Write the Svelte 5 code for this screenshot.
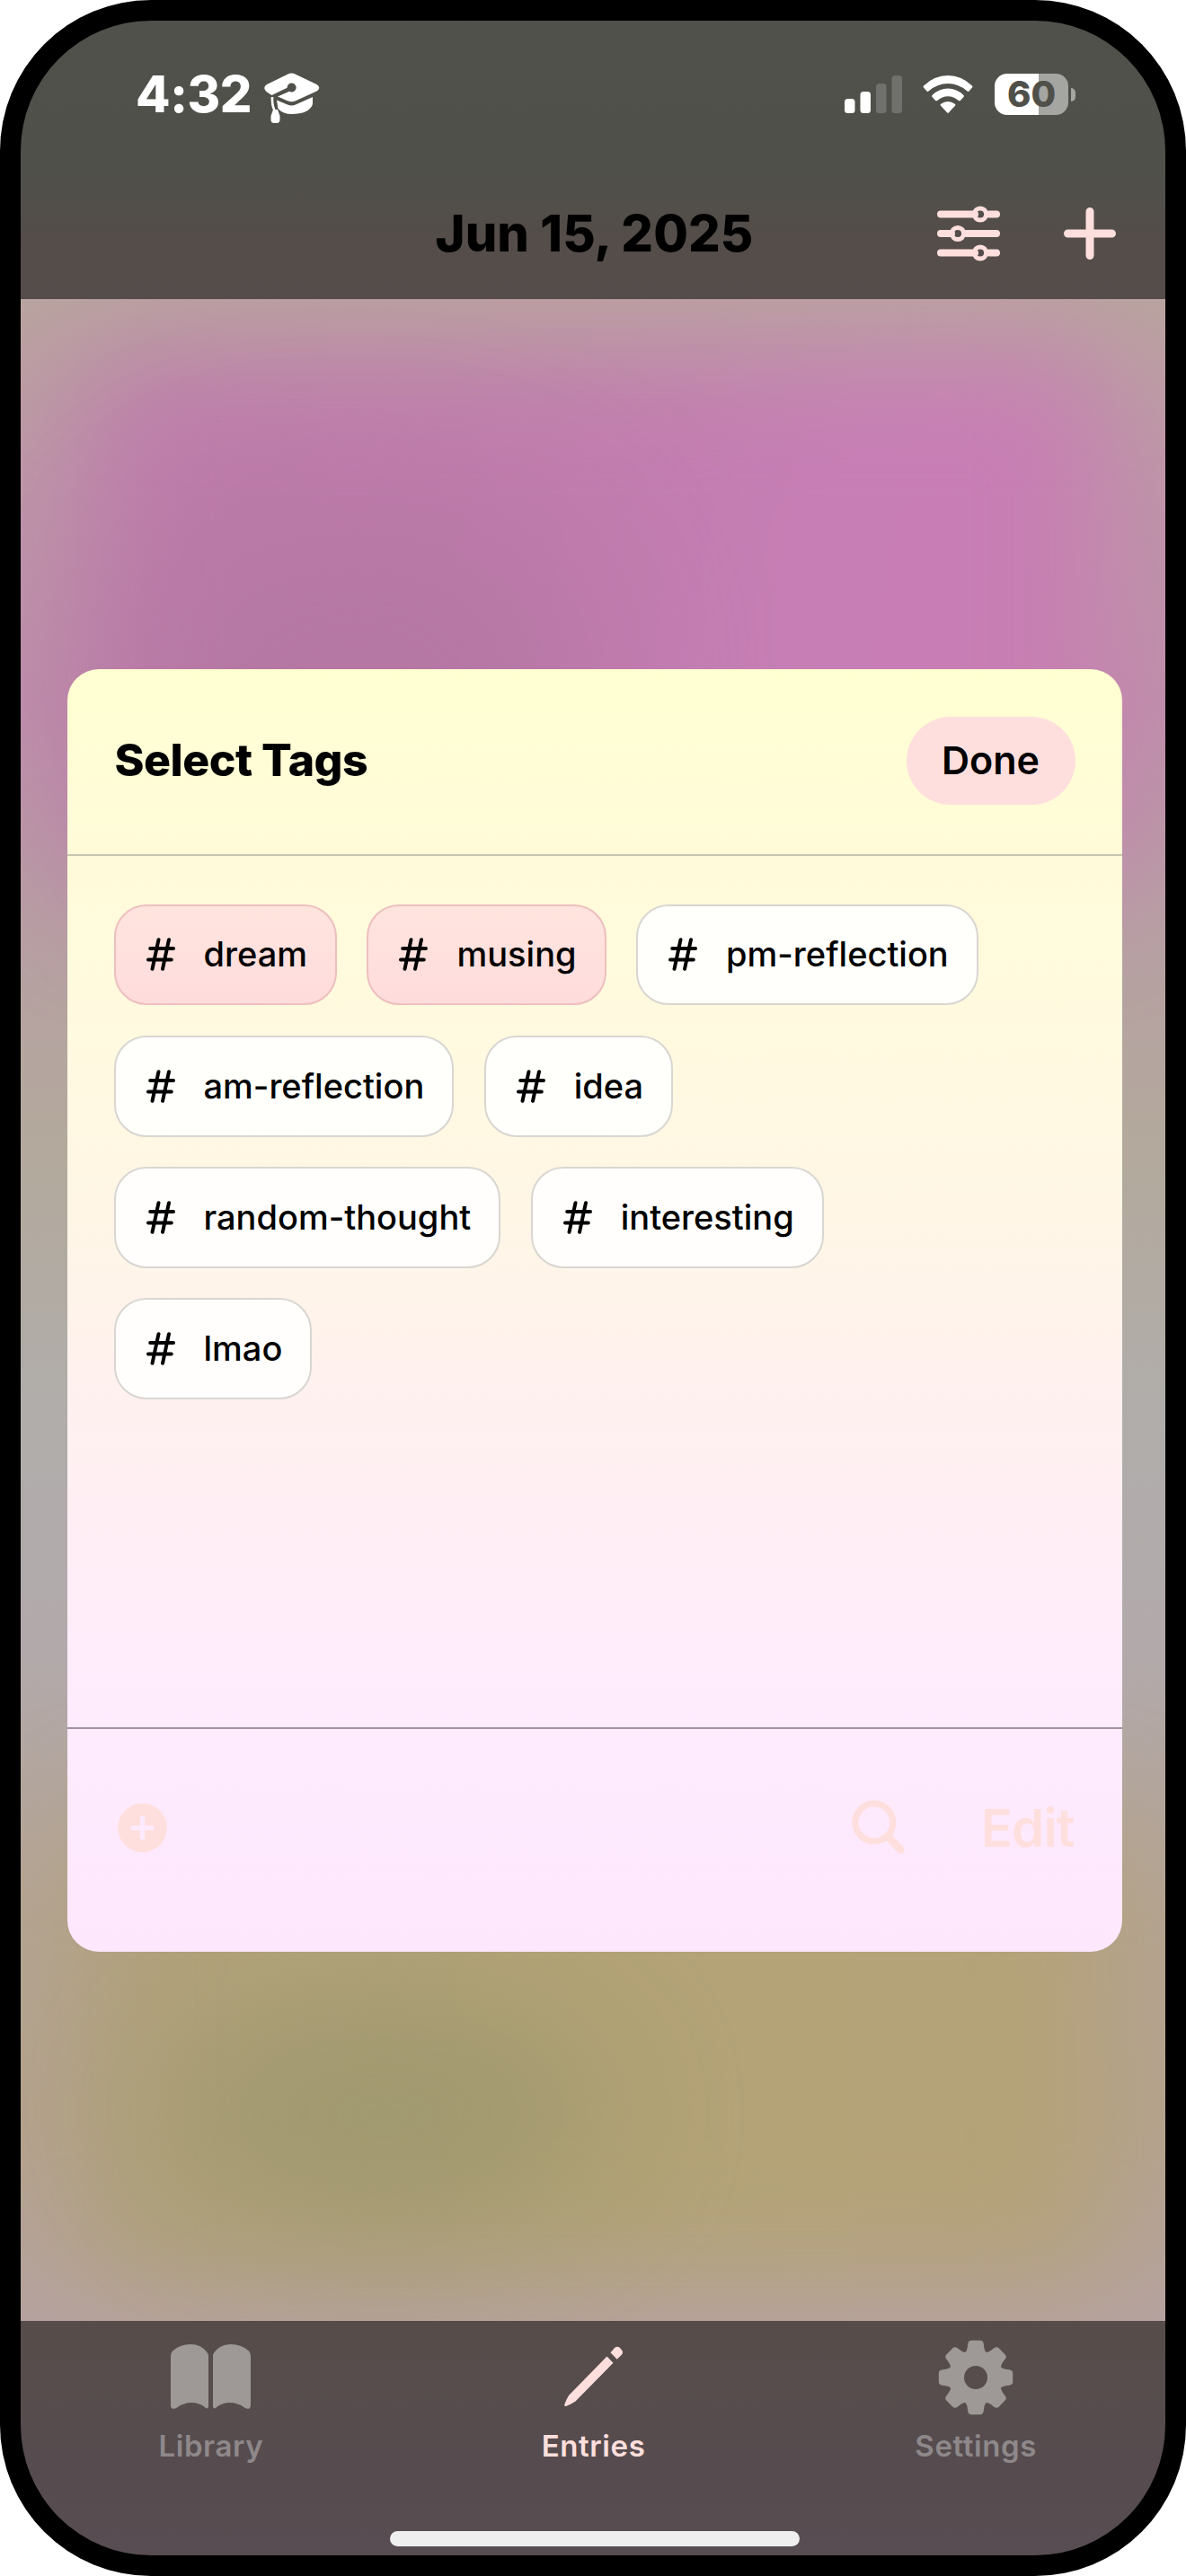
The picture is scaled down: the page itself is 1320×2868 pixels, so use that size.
<script>
  const tags = [
    { name: 'dream', selected: true },
    { name: 'musing', selected: true },
    { name: 'pm-reflection', selected: false },
    { name: 'am-reflection', selected: false },
    { name: 'idea', selected: false },
    { name: 'random-thought', selected: false },
    { name: 'interesting', selected: false },
    { name: 'lmao', selected: false }
  ];
</script>

<div class="phone">
  <div class="screen">
    <header>
      <div class="status">
        <div class="clock">
          <span class="time">4:32</span>
          <svg class="cap" width="62" height="57" viewBox="0 0 62 57">
            <path d="M26.500 1.500Q30.500 -0.500 34.500 1.500L58.500 13Q64 16.500 58.500 20.500L35 31.300Q30.500 33 26 31.300L15 26.500L28 20.800A5 5 0 1 0 25.600 16.800L8.500 25L3 21.500Q-2.500 16.500 3 13Z" fill="#fff" />
            <path d="M54 27V35Q50 46 30.500 46Q21 46 15.500 40L14 30.500L26 35.500Q30.500 37.500 35 35.500Z" fill="#fff" />
            <path d="M9 27Q8.600 36 11.500 42" stroke="#fff" stroke-width="2.600" fill="none" />
            <path d="M10 41H15L17.500 48V53Q17 56 14 56H11Q8 56 7.500 53V48Z" fill="#fff" />
          </svg>
        </div>
        <div class="indicators">
          <svg width="64" height="42" viewBox="0 0 64 42">
            <rect x="0" y="26" width="11.500" height="16" rx="3.500" fill="#fff" />
            <rect x="17.500" y="18" width="11.500" height="24" rx="3.500" fill="#fff" />
            <rect x="35" y="9" width="11.500" height="33" rx="3.500" fill="#70706d" />
            <rect x="52.500" y="0" width="11.500" height="42" rx="3.500" fill="#70706d" />
          </svg>
          <svg class="wifi" width="56" height="42" viewBox="0 0 56 42">
            <path d="M1 13.500Q0 12.500 1 11.500Q13 0 28 0T55 11.500Q56 12.500 55 13.500L51.500 17.500Q50.500 18.300 49.500 17.500Q40 9 28 9T6.500 17.500Q5.500 18.300 4.500 17.500Z" fill="#fff" />
            <path d="M10.500 24Q9.700 23 10.500 22Q18 14.500 28 14.500T45.500 22Q46.300 23 45.500 24L41.800 28Q40.800 28.700 39.800 28Q34.500 23.300 28 23.300T16.200 28Q15.200 28.700 14.200 28Z" fill="#fff" />
            <path d="M19.800 33.500Q19.300 32.500 20.200 31.700Q24 29 28 29T35.800 31.700Q36.700 32.500 36.200 33.500L29 41.300Q28 42.300 27 41.300Z" fill="#fff" />
          </svg>
          <div class="power">
            <div class="battery">60</div>
            <i class="nub"></i>
          </div>
        </div>
      </div>
      <div class="nav">
        <h1>Jun 15, 2025</h1>
        <div class="actions">
          <svg width="72" height="66" viewBox="0 0 72 66" fill="none" stroke="#ffdfdd">
            <g stroke-width="8" stroke-linecap="round">
              <path d="M5 11.500H43M59 11.500H67" />
              <path d="M5 33H17M33 33H67" />
              <path d="M5 54.500H43M59 54.500H67" />
            </g>
            <g stroke-width="5">
              <circle cx="49" cy="11.500" r="6.600" />
              <circle cx="24" cy="33" r="6.600" />
              <circle cx="49" cy="54.500" r="6.600" />
            </g>
          </svg>
          <svg width="58" height="58" viewBox="0 0 58 58">
            <path d="M29 4.500V53.500M4.500 29H53.500" stroke="#ffdfdd" stroke-width="9" stroke-linecap="round" />
          </svg>
        </div>
      </div>
    </header>

    <main>
      <div class="glow pink"></div>
      <div class="glow plum"></div>
      <div class="glow olive"></div>
      <div class="glow moss"></div>

      <section class="sheet">
        <div class="sheet-head">
          <h2>Select Tags</h2>
          <button class="done">Done</button>
        </div>
        <div class="tags">
          {#each tags as tag}
            <button class="tag" class:selected={tag.selected}>
              <svg width="32" height="37" viewBox="0 0 32 37">
                <path d="M13.500 2.200L6.500 34.800M25 2.200L18 34.800M4.200 12H30M2 24.500H27.800" stroke="#000" stroke-width="4" stroke-linecap="round" />
              </svg>
              <span>{tag.name}</span>
            </button>
          {/each}
        </div>
        <div class="sheet-foot">
          <svg class="add" width="55" height="56" viewBox="0 0 55 56">
            <circle cx="27.500" cy="28" r="27.300" fill="#ffdfdd" />
            <path d="M27.500 17.500V38.500M17 28H38" stroke="#fdeafe" stroke-width="5.400" stroke-linecap="round" />
          </svg>
          <div class="foot-right">
            <svg width="60" height="61" viewBox="0 0 60 61" fill="none" stroke="#ffdfdd">
              <circle cx="24.800" cy="25" r="21" stroke-width="7" />
              <path d="M41 41.500L54.500 55.500" stroke-width="8.500" stroke-linecap="round" />
            </svg>
            <span class="edit">Edit</span>
          </div>
        </div>
      </section>
    </main>

    <footer>
      <nav>
        <div class="tab">
          <svg width="89" height="84" viewBox="0 0 89 84" fill="#9e9896">
            <path d="M0 18Q0 15 2 12.500Q10 5 22 5T40.500 14Q42 16 42 18V74Q41.500 78 38.500 75.500Q32 70 23.500 70Q14 70 7 75.500Q1 79 0 73.500Z" />
            <path d="M89 18Q89 15 87 12.500Q79 5 67 5T48.500 14Q47 16 47 18V74Q47.500 78 50.500 75.500Q57 70 65.500 70Q75 70 82 75.500Q88 79 89 73.500Z" />
          </svg>
          <span>Library</span>
        </div>
        <div class="tab active">
          <svg width="66" height="84" viewBox="0 0 66 84" fill="#ffdfdd">
            <path d="M47.500 18.500L54.500 25.800L12.500 68.500Q7 72 2 74Q-0.500 74.300 0.500 71.500Q2 67 5 62Z" />
            <path d="M51.500 14.200L56 9Q59 6.500 62 9L64 11.500Q66 14 64 16.500L58.700 21.800Z" />
          </svg>
          <span>Entries</span>
        </div>
        <div class="tab">
          <svg width="84" height="84" viewBox="-42 -42 84 84">
            <defs>
              <mask id="hub">
                <rect x="-42" y="-42" width="84" height="84" fill="#fff" />
                <circle r="13" fill="#000" />
              </mask>
            </defs>
            <g mask="url(#hub)" fill="#9e9896">
              <circle r="30.500" />
              {#each [0, 45, 90, 135, 180, 225, 270, 315] as angle}
                <path d="M-12.500 -27Q-9.500 -29 -8.800 -37Q-8.300 -41.200 -5 -41.200H5Q8.300 -41.200 8.800 -37Q9.500 -29 12.500 -27Z" transform="rotate({angle})" />
              {/each}
            </g>
          </svg>
          <span>Settings</span>
        </div>
      </nav>
      <div class="home"></div>
    </footer>
  </div>
</div>

<style>
  :global(body) {
    background: #fff;
  }
  .phone {
    box-sizing: border-box;
    width: 1320px;
    height: 2868px;
    padding: 23px;
    background: #000;
    border-radius: 168px;
    font-family: Inter, 'Liberation Sans', sans-serif;
    color: #000;
  }
  .screen {
    height: 2822px;
    border-radius: 145px;
    overflow: hidden;
    display: flex;
    flex-direction: column;
  }
  svg {
    display: block;
    flex: none;
  }
  header {
    flex: none;
    height: 310px;
    background: linear-gradient(#50514a 0%, #50504a 55%, #544d49 78%, #554d4b 100%);
  }
  .status {
    box-sizing: border-box;
    height: 164px;
    padding: 0 100px 0 128px;
    display: flex;
    justify-content: space-between;
    align-items: center;
  }
  .clock {
    display: flex;
    align-items: center;
    gap: 15px;
    color: #fff;
  }
  .time {
    width: 128px;
    font-size: 56px;
    line-height: 60px;
    font-weight: 800;
    letter-spacing: -0.4px;
  }
  .cap {
    margin-top: 8px;
  }
  .indicators {
    display: flex;
    align-items: center;
  }
  .wifi {
    margin: 0 24px 0 23px;
  }
  .power {
    display: flex;
    align-items: center;
    gap: 3px;
  }
  .battery {
    width: 82px;
    height: 46px;
    border-radius: 14px;
    background: linear-gradient(90deg, #fff 60%, #a5a5a2 60%);
    color: #50504a;
    font-size: 40px;
    font-weight: 800;
    line-height: 46px;
    text-align: center;
  }
  .nub {
    width: 5px;
    height: 15px;
    border-radius: 0 8px 8px 0;
    background: #a5a5a2;
  }
  .nav {
    display: grid;
    grid-template-columns: 1fr auto 1fr;
    align-items: center;
    height: 146px;
    padding: 0 55px 0 58px;
  }
  h1 {
    grid-column: 2;
    margin: 0;
    font-size: 56px;
    font-weight: 800;
    letter-spacing: 0.1px;
    line-height: 146px;
  }
  .actions {
    display: flex;
    justify-content: flex-end;
    align-items: center;
    gap: 70px;
  }
  main {
    flex: 1;
    position: relative;
    overflow: hidden;
    display: flex;
    align-items: center;
    justify-content: center;
    padding-left: 3px;
    background: linear-gradient(#b9a59f 0%, #bd98a7 9%, #be90aa 20%, #b7a0a3 31%, #b3a99c 42%, #b0adab 56%, #b2a9aa 67%, #b4a393 80%, #b4a28f 90%, #b6a2a0 100%);
  }
  .glow {
    position: absolute;
  }
  .pink {
    left: 70px;
    top: 60px;
    width: 1140px;
    height: 600px;
    background: linear-gradient(100deg, #be7dab 0%, #c17dae 45%, #c87eb6 75%, #c77eb0 100%);
    filter: blur(66px);
  }
  .plum {
    left: 110px;
    top: 230px;
    width: 520px;
    height: 400px;
    border-radius: 160px;
    background: #ad739d;
    opacity: 0.6;
    filter: blur(100px);
  }
  .olive {
    left: 70px;
    top: 1700px;
    width: 1140px;
    height: 500px;
    background: linear-gradient(90deg, #b1a17b, #b3a376 50%, #b4a279);
    filter: blur(62px);
  }
  .moss {
    left: 150px;
    top: 1900px;
    width: 510px;
    height: 240px;
    border-radius: 50%;
    background: #98946b;
    opacity: 0.75;
    filter: blur(85px);
  }
  .sheet {
    position: relative;
    width: 1174px;
    height: 1428px;
    border-radius: 35px;
    overflow: hidden;
    display: flex;
    flex-direction: column;
    background: linear-gradient(#ffffd2 0%, #fffbd9 14%, #fffadf 27%, #fff6e6 43%, #fff1ef 56%, #ffeef5 68%, #feecfd 80%, #fde7fd 100%);
  }
  .sheet-head {
    box-sizing: border-box;
    height: 208px;
    border-bottom: 2px solid #c9c5ad;
    padding: 0 52px 1px 53px;
    display: flex;
    align-items: center;
    justify-content: space-between;
  }
  h2 {
    margin: -3px 0 0;
    font-size: 50px;
    font-weight: 800;
    letter-spacing: -0.5px;
  }
  button {
    appearance: none;
    margin: 0;
    padding: 0;
    border: 0;
    font-family: inherit;
    color: #000;
  }
  .done {
    width: 188px;
    height: 98px;
    padding-bottom: 2px;
    border-radius: 49px;
    background: #ffdfdd;
    font-size: 43px;
    font-weight: 640;
  }
  .tags {
    flex: 1;
    padding: 54px 122px 0 52px;
    display: flex;
    flex-wrap: wrap;
    align-content: flex-start;
    gap: 33.500px;
  }
  .tag {
    box-sizing: border-box;
    height: 112.800px;
    padding: 0 31px 0 34px;
    border: 2px solid #d9d6d2;
    border-radius: 36px;
    background: rgba(255, 255, 255, 0.88);
    display: flex;
    align-items: center;
    gap: 32px;
    font-size: 38px;
    font-weight: 540;
  }
  .tag span {
    margin-top: -1px;
  }
  .tag.selected {
    background: linear-gradient(#ffe4de, #ffdcdc);
    border-color: #edbfbf;
  }
  .sheet-foot {
    box-sizing: border-box;
    height: 250px;
    border-top: 2px solid #a2949f;
    padding: 0 53px 28px 56px;
    display: flex;
    align-items: center;
    justify-content: space-between;
  }
  .foot-right {
    display: flex;
    align-items: center;
    gap: 84px;
  }
  .edit {
    font-size: 58px;
    line-height: 60px;
    font-weight: 580;
    letter-spacing: -0.8px;
    color: #ffdfdd;
  }
  footer {
    flex: none;
    height: 261px;
    background: linear-gradient(#564d4a, #564c4f 60%, #574d52);
  }
  nav {
    height: 234px;
    margin: 0 -2px 0 -1px;
    display: flex;
  }
  .tab {
    flex: 1;
    padding-top: 21px;
    display: flex;
    flex-direction: column;
    align-items: center;
    gap: 14px;
    color: #8e888a;
    font-size: 33px;
    line-height: 40px;
    font-weight: 640;
    letter-spacing: 0.6px;
  }
  .tab.active {
    color: #ffdfdd;
  }
  .home {
    position: relative;
    left: 2px;
    width: 456px;
    height: 17px;
    margin: 0 auto;
    border-radius: 9px;
    background: #efefef;
  }
</style>
